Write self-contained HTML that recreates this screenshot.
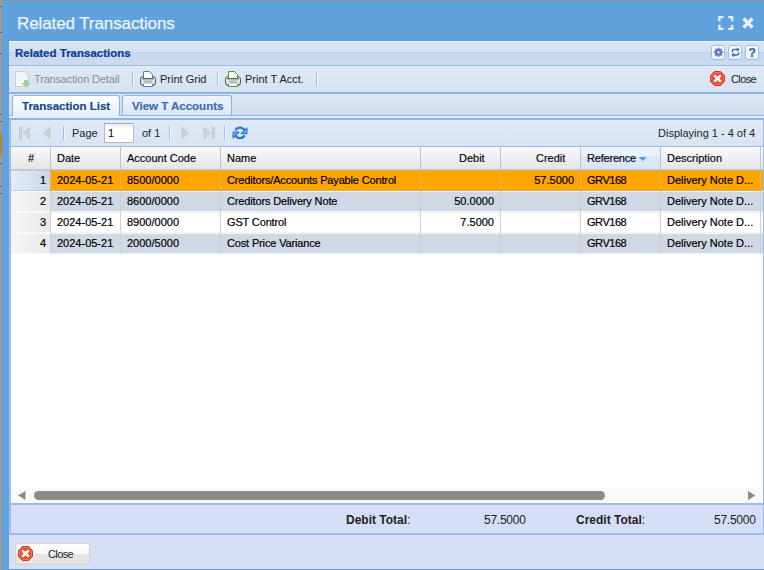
<!DOCTYPE html>
<html><head><meta charset="utf-8">
<style>
*{box-sizing:border-box;margin:0;padding:0}
html,body{width:764px;height:570px;overflow:hidden;background:#8f9299;font-family:"Liberation Sans",sans-serif;}
.a{position:absolute}
.t{position:absolute;white-space:nowrap;line-height:1;}
#lstrip{left:0;top:0;width:2px;height:570px;background:#9c9c9c}
#win{left:2px;top:1px;width:762px;height:569px;background:#5fa2dd}
#title{left:17px;top:15px;font-size:17px;color:#eef3f9;letter-spacing:-0.1px;-webkit-text-stroke:0.25px #eef3f9}
#body{left:9px;top:41px;width:755px;height:528px;background:#d9e3f2}
/* panel header */
#ph{left:9px;top:41px;width:755px;height:25px;border-bottom:1px solid #99bbe8;
 background:linear-gradient(#f0f5fb 0,#f0f5fb 1px,#d9e6f5 1px,#d3e1f3 11px,#bbcfeb 11px,#bbcfeb 12px,#c6d7ef 12px,#cadbf2 24px)}
#phT{left:15px;top:48px;font-size:11.5px;font-weight:bold;color:#0f3f87;-webkit-text-stroke:0.2px #0f3f87}
.tool{position:absolute;top:45px;width:14px;height:15px;border:1px solid #9dbde8;border-radius:3px;background:linear-gradient(#fff,#e9f1fb)}
/* toolbar */
#tb{left:9px;top:66px;width:755px;height:28px;border-bottom:2px solid #8db2e3;background:linear-gradient(#e4ecf7 0,#e4ecf7 1px,#dfe8f4 1px,#d8e3f2)}
.sep{position:absolute;width:2px;border-left:1px solid #98c0f4;border-right:1px solid #f5f9ff}
.tbt{font-size:11px;color:#222}
/* tab bar */
#tabbar{left:9px;top:94px;width:755px;height:21px;background:linear-gradient(#e0e9f5 0,#e0e9f5 1px,#dbe5f2 1px,#d1ddef)}
#tabline1{left:9px;top:115px;width:755px;height:1px;background:#8db2e3}
#tabstrip{left:9px;top:116px;width:755px;height:2px;background:#e4eefb}
#tabline2{left:9px;top:118px;width:755px;height:2px;background:#8fb3e3}
.tab{position:absolute;top:95px;height:22px;border:1px solid #8db2e3;border-bottom:none;border-radius:3px 3px 0 0}
.tabt{font-size:11.5px;font-weight:bold;color:#15428b;-webkit-text-stroke:0.15px currentColor}
/* grid panel */
#grid{left:10px;top:120px;width:754px;height:415px;border-left:1px solid #99bbe8;border-right:1px solid #99bbe8;background:#fff}
#pt{left:11px;top:120px;width:752px;height:26px;background:linear-gradient(#e0e9f5,#d8e3f2)}
#hdr{left:11px;top:146px;width:752px;height:24px;border-top:1px solid #99bbe8;border-bottom:1px solid #c5c5c5;background:linear-gradient(#fafafa,#e4e5e7)}
.hc{position:absolute;top:147px;height:22px;border-right:1px solid #c5c5c5}
.ht{font-size:11px;color:#000;top:153px;-webkit-text-stroke:0.15px #000}
.row{position:absolute;left:11px;width:752px;height:21px;border-top:1px solid #f2f3f5;border-bottom:1px solid #f2f3f5}
.c{position:absolute;font-size:11px;color:#000;white-space:nowrap;line-height:1;-webkit-text-stroke:0.2px #000}
.vl{position:absolute;width:1px;background:#d0d0d0}
</style></head><body>
<div class="a" id="lstrip"></div><div class="a" style="left:0;top:6px;width:2px;height:1px;background:#606060"></div><div class="a" style="left:0;top:32px;width:2px;height:1px;background:#606060"></div><div class="a" style="left:0;top:53px;width:2px;height:1px;background:#606060"></div><div class="a" style="left:0;top:114px;width:2px;height:1px;background:#606060"></div><div class="a" style="left:0;top:121px;width:2px;height:1px;background:#606060"></div><div class="a" style="left:0;top:138px;width:2px;height:1px;background:#606060"></div><div class="a" style="left:0;top:143px;width:2px;height:1px;background:#606060"></div><div class="a" style="left:0;top:163px;width:2px;height:1px;background:#606060"></div><div class="a" style="left:0;top:186px;width:2px;height:1px;background:#606060"></div><div class="a" style="left:0;top:193px;width:2px;height:1px;background:#606060"></div><div class="a" style="left:0;top:132px;width:2px;height:24px;background:#b8862e"></div>
<div class="a" id="win"></div>
<div class="t" id="title">Related Transactions</div>
<!-- window tools -->
<svg class="a" style="left:716px;top:14px" width="40" height="18" viewBox="0 0 40 18">
 <g fill="none" stroke="#e6eef8" stroke-width="2.3">
  <path d="M3.4 7.2V3.1H7.5M12.2 3.1H16.2V7.2M16.2 10.8V14.8H12.2M7.5 14.8H3.4V10.8"/>
  <path d="M27.5 4.5L36.5 13.5M36.5 4.5L27.5 13.5" stroke-width="3.2"/>
 </g>
</svg>
<div class="a" id="body"></div>
<div class="a" id="ph"></div>
<div class="t" id="phT">Related Transactions</div>
<div class="tool" style="left:711px"></div>
<div class="tool" style="left:728px"></div>
<div class="tool" style="left:745px"></div>
<svg class="a" style="left:711px;top:45px" width="50" height="14" viewBox="0 0 50 14">
 <g transform="translate(7.5 7.2)" fill="#7078c4">
  <circle r="3.4"/>
  <g id="teeth"><rect x="-1" y="-4.6" width="2" height="2"/><rect x="-1" y="2.6" width="2" height="2"/><rect x="-4.6" y="-1" width="2" height="2"/><rect x="2.6" y="-1" width="2" height="2"/></g>
  <g transform="rotate(45)"><rect x="-1" y="-4.6" width="2" height="2"/><rect x="-1" y="2.6" width="2" height="2"/><rect x="-4.6" y="-1" width="2" height="2"/><rect x="2.6" y="-1" width="2" height="2"/></g>
  <circle r="1.2" fill="#d8dcf2"/>
 </g>
 <g fill="none" stroke="#3d6fb0" stroke-width="1.5">
  <path d="M21.3 7.2V6.2q0-1.7 1.7-1.7h3.2"/>
  <path d="M27.7 7.2V8.2q0 1.7-1.7 1.7h-3.2"/>
 </g>
 <path d="M25.8 2.2L28.8 4.5 25.8 6.8z" fill="#3d6fb0"/>
 <path d="M23.2 7.6L20.2 9.9 23.2 12.2z" fill="#3d6fb0"/>
 <text x="41.2" y="11.8" font-family="Liberation Sans" font-weight="bold" font-size="12" fill="#4572b0" stroke="#4572b0" stroke-width="0.4" text-anchor="middle">?</text>
</svg>
<!-- toolbar -->
<div class="a" id="tb"></div>
<svg class="a" style="left:15px;top:71px" width="16" height="17" viewBox="0 0 16 17">
 <path d="M0.5 0.5H9.5L13.5 4.5V15.5H0.5Z" fill="#f3f5f8" stroke="#c9ccd1"/>
 <path d="M9 9h4v3h2.5L11 16.5 6.5 12H9z" fill="#9ccf9c"/>
</svg>
<div class="t tbt" style="left:34px;top:74px;color:#8a8d92;letter-spacing:-0.17px">Transaction Detail</div>
<div class="sep" style="left:132px;top:72px;height:14px"></div>
<svg class="a" style="left:140px;top:71px" width="16" height="16" viewBox="0 0 16 16">
 <defs><linearGradient id="g1" x1="0" y1="0" x2="0" y2="1"><stop offset="0" stop-color="#fdfdfd"/><stop offset="1" stop-color="#d0d0d0"/></linearGradient></defs>
 <path d="M3.2 5.5H12.8Q15.5 5.5 15.5 8.5V11.5Q15.5 14.5 12.8 14.5H3.2Q0.5 14.5 0.5 11.5V8.5Q0.5 5.5 3.2 5.5Z" fill="url(#g1)" stroke="#4d4d4d"/>
 <path d="M3.5 0.5H9.5L12.5 3.5V7.5H3.5Z" fill="#fff" stroke="#3a82d8"/>
 <path d="M2 7.8H14" stroke="#555" stroke-width="1.1"/>
 <rect x="4" y="9.3" width="8" height="2.7" fill="#bcbcbc"/>
 <path d="M3.5 13V15.5H12.5V13" fill="#fff" stroke="#3a82d8"/>
</svg>
<div class="t tbt" style="left:160px;top:74px">Print Grid</div>
<div class="sep" style="left:217px;top:72px;height:14px"></div>
<svg class="a" style="left:225px;top:71px" width="16" height="16" viewBox="0 0 16 16">
 <defs><linearGradient id="g2" x1="0" y1="0" x2="0" y2="1"><stop offset="0" stop-color="#fdfdfd"/><stop offset="1" stop-color="#d0d0d0"/></linearGradient></defs>
 <path d="M3.2 5.5H12.8Q15.5 5.5 15.5 8.5V11.5Q15.5 14.5 12.8 14.5H3.2Q0.5 14.5 0.5 11.5V8.5Q0.5 5.5 3.2 5.5Z" fill="url(#g2)" stroke="#4d4d4d"/>
 <path d="M3.5 0.5H9.5L12.5 3.5V7.5H3.5Z" fill="#fff" stroke="#3aa53a"/>
 <path d="M2 7.8H14" stroke="#555" stroke-width="1.1"/>
 <rect x="4" y="9.3" width="8" height="2.7" fill="#bcbcbc"/>
 <path d="M3.5 13V15.5H12.5V13" fill="#fff" stroke="#3aa53a"/>
</svg>
<div class="t tbt" style="left:245px;top:74px">Print T Acct.</div>
<div class="sep" style="left:316px;top:72px;height:14px"></div>
<svg class="a" style="left:710px;top:71px" width="15" height="15" viewBox="0 0 15 15">
 <path d="M4.5 0.5H10.5L14.5 4.5V10.5L10.5 14.5H4.5L0.5 10.5V4.5Z" fill="#e8492f" stroke="#cf3a21"/>
 <path d="M5 1.6H10L13.4 5V10L10 13.4H5L1.6 10V5Z" fill="none" stroke="#f4826c" stroke-width="0.9"/>
 <path d="M4.3 4.3L10.7 10.7M10.7 4.3L4.3 10.7" stroke="#fff" stroke-width="2.5"/>
</svg>
<div class="t tbt" style="left:731px;top:74px;letter-spacing:-0.6px">Close</div>
<!-- tab bar -->
<div class="a" id="tabbar"></div>
<div class="a" id="tabline1"></div>
<div class="a" id="tabstrip"></div>
<div class="a" id="tabline2"></div>
<div class="tab" style="left:12px;width:108px;height:21px;background:linear-gradient(#fff,#e4eefb)"></div>
<div class="tab" style="left:122px;width:110px;height:20px;background:linear-gradient(#eef3fb,#d9e6f7)"></div>
<div class="t tabt" style="left:22px;top:101px">Transaction List</div>
<div class="t tabt" style="left:132px;top:101px;color:#3e6aaa">View T Accounts</div>
<!-- grid -->
<div class="a" id="grid"></div>
<div class="a" id="pt"></div>
<div class="a" style="left:9px;top:120px;width:1px;height:415px;background:#a6c2ea"></div>

<!-- paging toolbar -->
<svg class="a" style="left:19px;top:127px" width="34" height="12" viewBox="0 0 34 12">
 <rect x="0.3" y="0.3" width="2.4" height="11.4" fill="#d2d5d9" stroke="#b9bdc2" stroke-width="0.6"/>
 <path d="M10.5 0.3L4 6l6.5 5.7z" fill="#cfd2d6" stroke="#b9bdc2" stroke-width="0.6"/>
 <path d="M31 0.3L24.5 6l6.5 5.7z" fill="#cfd2d6" stroke="#b9bdc2" stroke-width="0.6"/>
</svg>
<div class="sep" style="left:63px;top:126px;height:14px"></div>
<div class="t tbt" style="left:72px;top:128px">Page</div>
<div class="a" style="left:104px;top:123px;width:30px;height:20px;border:1px solid #b5b8c8;border-top-color:#a9acbc;background:linear-gradient(#ececec 0,#fff 5px)"></div>
<div class="t tbt" style="left:108px;top:128px;color:#000">1</div>
<div class="t tbt" style="left:142px;top:128px">of 1</div>
<div class="sep" style="left:169px;top:126px;height:14px"></div>
<svg class="a" style="left:181px;top:127px" width="34" height="12" viewBox="0 0 34 12">
 <path d="M1 0.3L7.5 6L1 11.7z" fill="#cfd2d6" stroke="#b9bdc2" stroke-width="0.6"/>
 <path d="M23 0.3L29.5 6L23 11.7z" fill="#cfd2d6" stroke="#b9bdc2" stroke-width="0.6"/>
 <rect x="31" y="0.3" width="2.4" height="11.4" fill="#d2d5d9" stroke="#b9bdc2" stroke-width="0.6"/>
</svg>
<div class="sep" style="left:224px;top:126px;height:14px"></div>
<svg class="a" style="left:232px;top:125px" width="16" height="16" viewBox="0 0 16 16">
 <g fill="none" stroke="#2a78dc" stroke-width="2.3" stroke-linecap="butt">
  <path d="M3.4 5.4A5.2 5.2 0 0 1 12.6 5.6"/>
  <path d="M12.6 10.4A5.2 5.2 0 0 1 3.6 10.6"/>
 </g>
 <path d="M14.9 3.2V8.6H9.2Z" fill="#6fb2f0" stroke="#2a78dc" stroke-width="1.2" stroke-linejoin="round"/>
 <path d="M1.1 12.8V7.2H6.8Z" fill="#6fb2f0" stroke="#2a78dc" stroke-width="1.2" stroke-linejoin="round"/>
</svg>
<div class="t tbt" style="left:658px;top:128px">Displaying 1 - 4 of 4</div>
<!-- grid header -->
<div class="a" id="hdr"></div>
<div class="hc" style="left:11px;width:40px"></div>
<div class="hc" style="left:51px;width:70px"></div>
<div class="hc" style="left:121px;width:100px"></div>
<div class="hc" style="left:221px;width:200px"></div>
<div class="hc" style="left:421px;width:80px"></div>
<div class="hc" style="left:501px;width:80px"></div>
<div class="hc" style="left:581px;width:80px;border-right-color:#a6c8f0;background:linear-gradient(#ecf3fc 0,#e9f1fb 9px,#d9e7f8 9px,#d8e6f7 100%)"></div>
<div class="hc" style="left:661px;width:100px"></div>
<div class="t ht" style="left:28px">#</div>
<div class="t ht" style="left:57px">Date</div>
<div class="t ht" style="left:127px">Account Code</div>
<div class="t ht" style="left:227px">Name</div>
<div class="t ht" style="left:459px">Debit</div>
<div class="t ht" style="left:536px">Credit</div>
<div class="t ht" style="left:587px;letter-spacing:-0.2px">Reference</div>
<svg class="a" style="left:639px;top:157px" width="8" height="5"><path d="M0 0H7.5L3.75 4z" fill="#5e93d3"/></svg>
<div class="t ht" style="left:667px">Description</div>
<div class="row" style="top:170px;background:#ffa500;border-top:1px dotted #b4bccb;border-bottom:1px dotted #b4bccb"></div>
<div class="a" style="left:11px;top:170px;width:39px;height:21px;border-top:1px dotted #b4bccb;border-bottom:1px dotted #b4bccb;background:linear-gradient(to right,#e4ecf8,#c9d8ee)"></div>
<div class="c" style="left:40px;top:175px">1</div>
<div class="c" style="left:57px;top:175px">2024-05-21</div>
<div class="c" style="left:127px;top:175px">8500/0000</div>
<div class="c" style="left:227px;top:175px;letter-spacing:-0.15px">Creditors/Accounts Payable Control</div>
<div class="c" style="right:190px;top:175px">57.5000</div>
<div class="c" style="left:587px;top:175px;letter-spacing:-0.45px">GRV168</div>
<div class="c" style="left:667px;top:175px">Delivery Note D...</div>
<div class="row" style="top:191px;background:#d0d8e6"></div>
<div class="a" style="left:11px;top:191px;width:39px;height:21px;border-top:1px solid #f9f9f9;border-bottom:1px solid #f9f9f9;background:linear-gradient(to right,#f5f5f5,#e9e9e9)"></div>
<div class="c" style="left:40px;top:196px">2</div>
<div class="c" style="left:57px;top:196px">2024-05-21</div>
<div class="c" style="left:127px;top:196px">8600/0000</div>
<div class="c" style="left:227px;top:196px;letter-spacing:-0.15px">Creditors Delivery Note</div>
<div class="c" style="right:270px;top:196px">50.0000</div>
<div class="c" style="left:587px;top:196px;letter-spacing:-0.45px">GRV168</div>
<div class="c" style="left:667px;top:196px">Delivery Note D...</div>
<div class="row" style="top:212px;background:#ffffff"></div>
<div class="a" style="left:11px;top:212px;width:39px;height:21px;border-top:1px solid #f9f9f9;border-bottom:1px solid #f9f9f9;background:linear-gradient(to right,#f5f5f5,#e9e9e9)"></div>
<div class="c" style="left:40px;top:217px">3</div>
<div class="c" style="left:57px;top:217px">2024-05-21</div>
<div class="c" style="left:127px;top:217px">8900/0000</div>
<div class="c" style="left:227px;top:217px;letter-spacing:-0.15px">GST Control</div>
<div class="c" style="right:270px;top:217px">7.5000</div>
<div class="c" style="left:587px;top:217px;letter-spacing:-0.45px">GRV168</div>
<div class="c" style="left:667px;top:217px">Delivery Note D...</div>
<div class="row" style="top:233px;background:#d0d8e6"></div>
<div class="a" style="left:11px;top:233px;width:39px;height:21px;border-top:1px solid #f9f9f9;border-bottom:1px solid #f9f9f9;background:linear-gradient(to right,#f5f5f5,#e9e9e9)"></div>
<div class="c" style="left:40px;top:238px">4</div>
<div class="c" style="left:57px;top:238px">2024-05-21</div>
<div class="c" style="left:127px;top:238px">2000/5000</div>
<div class="c" style="left:227px;top:238px;letter-spacing:-0.15px">Cost Price Variance</div>
<div class="c" style="left:587px;top:238px;letter-spacing:-0.45px">GRV168</div>
<div class="c" style="left:667px;top:238px">Delivery Note D...</div>
<div class="vl" style="left:50px;top:170px;height:21px;background:repeating-linear-gradient(#ffa500 0,#ffa500 1px,#c4c4c4 1px,#c4c4c4 2px)"></div><div class="vl" style="left:50px;top:191px;height:63px"></div>
<div class="vl" style="left:120px;top:170px;height:21px;background:repeating-linear-gradient(#ffa500 0,#ffa500 1px,#c4c4c4 1px,#c4c4c4 2px)"></div><div class="vl" style="left:120px;top:191px;height:63px"></div>
<div class="vl" style="left:220px;top:170px;height:21px;background:repeating-linear-gradient(#ffa500 0,#ffa500 1px,#c4c4c4 1px,#c4c4c4 2px)"></div><div class="vl" style="left:220px;top:191px;height:63px"></div>
<div class="vl" style="left:420px;top:170px;height:21px;background:repeating-linear-gradient(#ffa500 0,#ffa500 1px,#c4c4c4 1px,#c4c4c4 2px)"></div><div class="vl" style="left:420px;top:191px;height:63px"></div>
<div class="vl" style="left:500px;top:170px;height:21px;background:repeating-linear-gradient(#ffa500 0,#ffa500 1px,#c4c4c4 1px,#c4c4c4 2px)"></div><div class="vl" style="left:500px;top:191px;height:63px"></div>
<div class="vl" style="left:580px;top:170px;height:21px;background:repeating-linear-gradient(#ffa500 0,#ffa500 1px,#c4c4c4 1px,#c4c4c4 2px)"></div><div class="vl" style="left:580px;top:191px;height:63px"></div>
<div class="vl" style="left:660px;top:170px;height:21px;background:repeating-linear-gradient(#ffa500 0,#ffa500 1px,#c4c4c4 1px,#c4c4c4 2px)"></div><div class="vl" style="left:660px;top:191px;height:63px"></div>
<div class="vl" style="left:760px;top:170px;height:21px;background:repeating-linear-gradient(#ffa500 0,#ffa500 1px,#c4c4c4 1px,#c4c4c4 2px)"></div><div class="vl" style="left:760px;top:191px;height:63px"></div>

<!-- scrollbar -->
<div class="a" style="left:11px;top:488px;width:752px;height:15px;background:#fafafa"></div>
<svg class="a" style="left:18px;top:491px" width="8" height="9"><path d="M7.5 0V9L0 4.5z" fill="#8a8a8a"/></svg>
<div class="a" style="left:34px;top:491px;width:571px;height:9px;border-radius:4.5px;background:#8a8a8a"></div>
<svg class="a" style="left:748px;top:491px" width="8" height="9"><path d="M0 0V9L7.5 4.5z" fill="#8a8a8a"/></svg>
<!-- totals -->
<div class="a" style="left:10px;top:503px;width:754px;height:32px;border:1px solid #99bbe8;border-width:2px 1px;background:#d6def7"></div>
<div class="t" style="left:346px;top:514px;font-size:12px;color:#222"><b>Debit Total</b>:</div>
<div class="t" style="left:484px;top:514px;font-size:12px;color:#222;letter-spacing:-0.25px">57.5000</div>
<div class="t" style="left:576px;top:514px;font-size:12px;color:#222"><b>Credit Total</b>:</div>
<div class="t" style="left:714px;top:514px;font-size:12px;color:#222;letter-spacing:-0.25px">57.5000</div>
<!-- bottom toolbar -->
<div class="a" style="left:9px;top:535px;width:755px;height:34px;background:#d7dff7"></div>
<div class="a" style="left:15px;top:543px;width:75px;height:22px;border:1px solid #d4d4d4;border-radius:3px;background:linear-gradient(#fdfdfd 0,#f7f7f7 50%,#e6e6e6 50%,#e3e3e3 100%)"></div>
<svg class="a" style="left:18px;top:546px" width="15" height="15" viewBox="0 0 15 15">
 <path d="M4.5 0.5H10.5L14.5 4.5V10.5L10.5 14.5H4.5L0.5 10.5V4.5Z" fill="#e8492f" stroke="#cf3a21"/>
 <path d="M5 1.6H10L13.4 5V10L10 13.4H5L1.6 10V5Z" fill="none" stroke="#f4826c" stroke-width="0.9"/>
 <path d="M4.3 4.3L10.7 10.7M10.7 4.3L4.3 10.7" stroke="#fff" stroke-width="2.5"/>
</svg>
<div class="t tbt" style="left:48px;top:549px;letter-spacing:-0.6px">Close</div>
</body></html>
